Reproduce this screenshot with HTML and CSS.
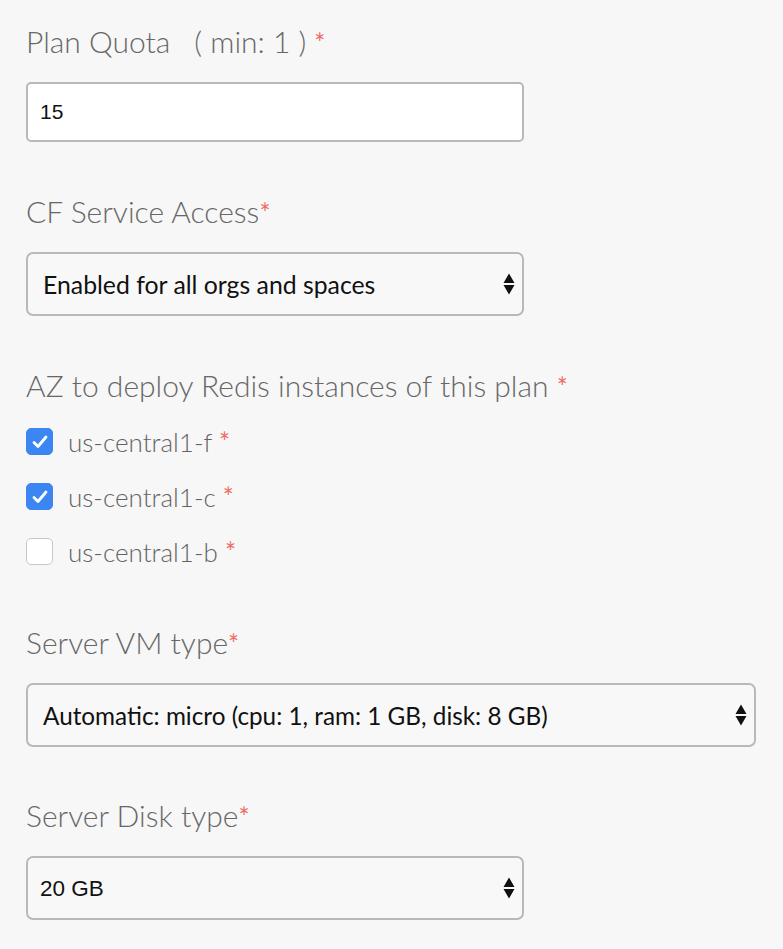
FILE: index.html
```html
<!DOCTYPE html>
<html>
<head>
<meta charset="utf-8">
<link rel="stylesheet" href="styles.css">
</head>
<body>
<form class="form">
  <div class="field field-first">
    <label class="label">Plan Quota <span class="hint">( min: 1 )</span> <span class="req">*</span></label>
    <input class="input" type="text" value="15">
  </div>

  <div class="field">
    <label class="label">CF Service Access<span class="req">*</span></label>
    <div class="select-wrap">
      <select class="select sans"><option>Enabled for all orgs and spaces</option></select>
      <svg class="arrows" width="12" height="22" viewBox="0 0 12 22"><path d="M6 0.5 L11.5 10 L0.5 10 Z M0.5 12 L11.5 12 L6 21.5 Z" fill="#111"/></svg>
    </div>
  </div>

  <div class="field">
    <label class="label">AZ to deploy Redis instances of this plan <span class="req">*</span></label>
    <div class="checks">
      <label class="check-row"><span class="box on"><svg width="16" height="14" viewBox="0 0 16 14"><path d="M2 7.5 L6 11.5 L14 2" fill="none" stroke="#fff" stroke-width="2.8" stroke-linecap="round" stroke-linejoin="round"/></svg></span><span class="check-text">us-central1-f <span class="req">*</span></span></label>
      <label class="check-row"><span class="box on"><svg width="16" height="14" viewBox="0 0 16 14"><path d="M2 7.5 L6 11.5 L14 2" fill="none" stroke="#fff" stroke-width="2.8" stroke-linecap="round" stroke-linejoin="round"/></svg></span><span class="check-text">us-central1-c <span class="req">*</span></span></label>
      <label class="check-row"><span class="box"></span><span class="check-text">us-central1-b <span class="req">*</span></span></label>
    </div>
  </div>

  <div class="field field-after-checks">
    <label class="label">Server VM type<span class="req">*</span></label>
    <div class="select-wrap wide">
      <select class="select sans vm"><option>Automatic: micro (cpu: 1, ram: 1 GB, disk: 8 GB)</option></select>
      <svg class="arrows" width="12" height="22" viewBox="0 0 12 22"><path d="M6 0.5 L11.5 10 L0.5 10 Z M0.5 12 L11.5 12 L6 21.5 Z" fill="#111"/></svg>
    </div>
  </div>

  <div class="field field-last">
    <label class="label">Server Disk type<span class="req">*</span></label>
    <div class="select-wrap">
      <select class="select arial"><option>20 GB</option></select>
      <svg class="arrows" width="12" height="22" viewBox="0 0 12 22"><path d="M6 0.5 L11.5 10 L0.5 10 Z M0.5 12 L11.5 12 L6 21.5 Z" fill="#111"/></svg>
    </div>
  </div>
</form>
</body>
</html>
```
FILE: styles.css
```css
html, body {
  margin: 0;
  padding: 0;
  background: #f7f7f7;
}
body {
  font-family: Lato, "Open Sans", sans-serif;
  width: 783px;
  height: 949px;
  overflow: hidden;
}
.form {
  padding: 22px 0 0 26px;
  display: flex;
  flex-direction: column;
}
.field {
  display: flex;
  flex-direction: column;
  margin-top: 50px;
}
.field-first { margin-top: 0; }
.field-after-checks { margin-top: 44px; }
.field-last { margin-top: 49px; }
.label {
  display: block;
  height: 38px;
  font-size: 30px;
  font-weight: 300;
  line-height: 38px;
  color: #676767;
  margin-bottom: 22px;
  white-space: nowrap;
}
.hint { margin-left: 16px; }
.req {
  color: #ef6b64;
  font-size: 26px;
  font-weight: 400;
  line-height: 1;
}
.input {
  display: block;
  box-sizing: border-box;
  width: 498px;
  height: 60px;
  margin: 0;
  border: 2px solid #b9b9b9;
  border-radius: 5px;
  background: #fff;
  padding: 0 12px;
  font-family: "Liberation Sans", Arial, sans-serif;
  font-size: 21px;
  color: #111;
  outline: none;
}
.select-wrap {
  position: relative;
  width: 498px;
  height: 64px;
}
.select-wrap.wide { width: 730px; }
.select {
  -webkit-appearance: none;
  appearance: none;
  display: block;
  box-sizing: border-box;
  width: 100%;
  height: 100%;
  margin: 0;
  border: 2px solid #b9b9b9;
  border-radius: 7px;
  background: #f8f8f8;
  padding: 0 40px 0 15px;
  color: #111;
  outline: none;
}
.select.sans {
  font-family: Lato, "Open Sans", sans-serif;
  font-size: 24.8px;
}
.select.sans.vm { font-size: 24.3px; }
.select.arial {
  font-family: "Liberation Sans", Arial, sans-serif;
  font-size: 22.5px;
  padding-left: 12px;
}
.arrows {
  position: absolute;
  right: 9px;
  top: 21px;
  pointer-events: none;
}
.checks {
  display: flex;
  flex-direction: column;
  margin-top: -12px;
}
.check-row {
  display: flex;
  align-items: center;
  height: 55px;
  gap: 15px;
}
.box {
  box-sizing: border-box;
  width: 27px;
  height: 27px;
  border-radius: 5px;
  border: 1.5px solid #c8c8c8;
  background: #fff;
  display: flex;
  align-items: center;
  justify-content: center;
}
.box.on {
  background: #3b86f2;
  border-color: #3b86f2;
}
.check-text {
  font-size: 26px;
  font-weight: 300;
  color: #636363;
}
```
